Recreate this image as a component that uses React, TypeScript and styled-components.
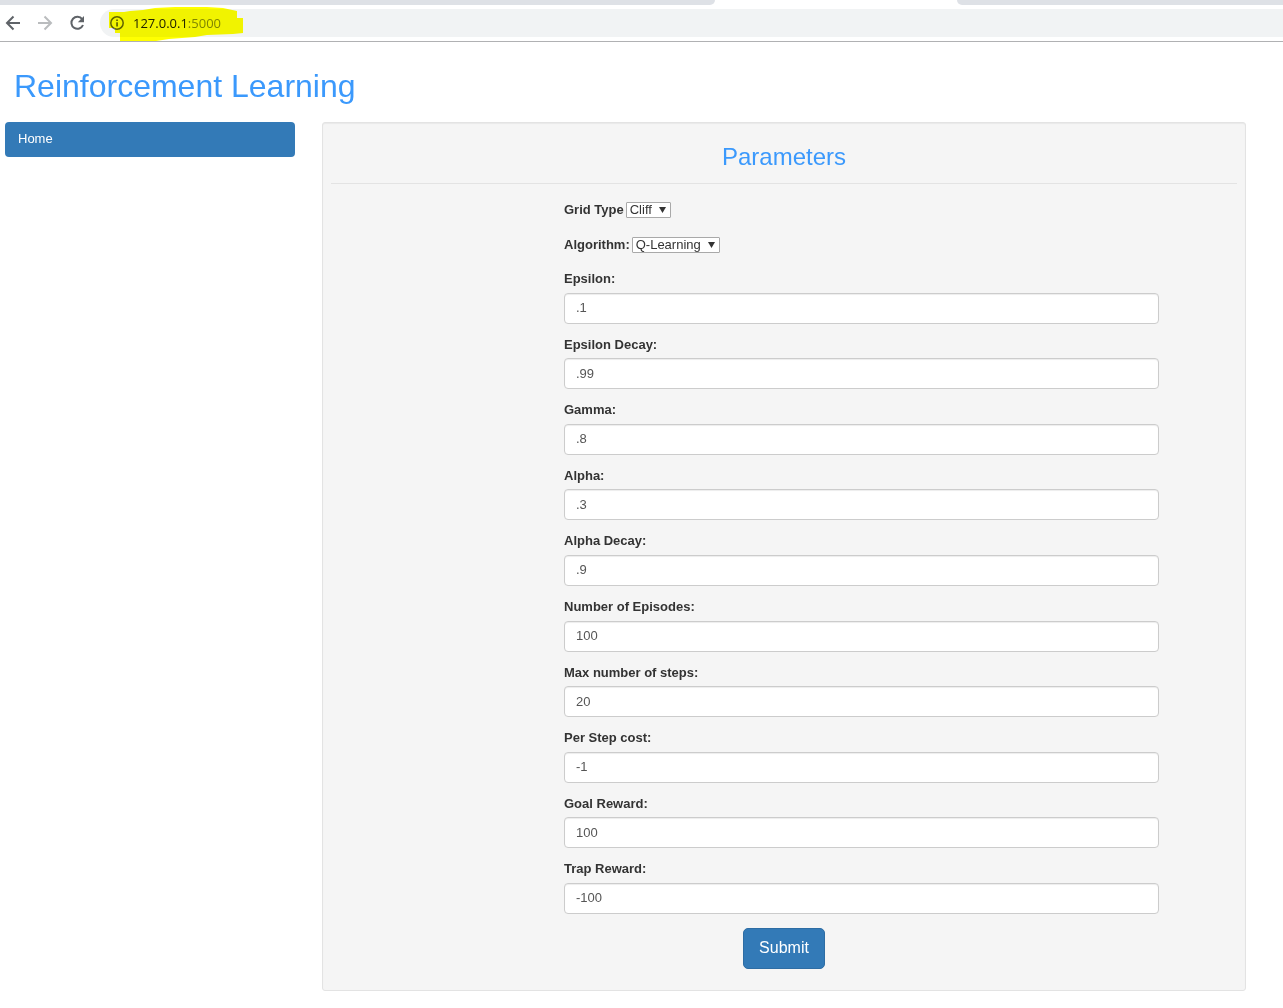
import React from "react";
import styled, { createGlobalStyle } from "styled-components";

const GlobalStyle = createGlobalStyle`
  * { box-sizing: border-box; }
  body {
    margin: 0;
    background: #fff;
    color: #333;
    font-family: "Liberation Sans", Arial, sans-serif;
    font-size: 13px;
    line-height: 1.42857;
  }
`;

const TabStrip = styled.div`
  display: flex;
  height: 5px;
  background: #fff;
`;

const InactiveTabs = styled.div<{ $side: "left" | "right" }>`
  flex: ${(p) => (p.$side === "left" ? "715 1 0" : "326 1 0")};
  background: #dee1e6;
  border-radius: ${(p) => (p.$side === "left" ? "0 0 6px 0" : "0 0 0 6px")};
`;

const ActiveTab = styled.div`
  flex: 242 1 0;
`;

const Toolbar = styled.header`
  display: flex;
  align-items: center;
  height: 37px;
  padding-left: 4px;
  border-bottom: 1px solid #b0b1b3;
`;

const NavButton = styled.button`
  display: flex;
  align-items: center;
  justify-content: center;
  width: 18px;
  height: 18px;
  margin-right: 14px;
  padding: 0;
  border: 0;
  background: none;
`;

const AddressBar = styled.div`
  position: relative;
  display: flex;
  align-items: center;
  flex: 1;
  gap: 9px;
  height: 28px;
  padding-left: 10px;
  border-radius: 14px 0 0 14px;
  background: #f1f3f4;
`;

const Url = styled.div`
  font: 13px/18px "Open Sans", "Noto Sans", sans-serif;
  color: #202124;
`;

const Port = styled.span`
  color: #80868b;
`;

const Marker = styled.svg`
  position: absolute;
  left: 9px;
  top: -2px;
  mix-blend-mode: multiply;
  pointer-events: none;
`;

const Title = styled.h1`
  margin: 0;
  padding: 24px 14px 16px;
  color: #3b99fc;
  font-size: 32px;
  font-weight: 400;
  line-height: 40px;
`;

const Layout = styled.div`
  display: flex;
  align-items: flex-start;
  gap: 27px;
  padding: 0 37px 17px 5px;
`;

const Sidebar = styled.nav`
  flex: 0 0 290px;
`;

const SidebarLink = styled.a`
  display: block;
  padding: 8px 13px 9px;
  border-radius: 4px;
  background: #337ab7;
  color: #fff;
  line-height: 18px;
  text-decoration: none;
`;

const Well = styled.main`
  flex: 1;
  min-width: 0;
  padding: 8px 8px 21px;
  border: 1px solid #e3e3e3;
  border-radius: 3px;
  background: #f5f5f5;
  box-shadow: inset 0 1px 1px rgba(0, 0, 0, 0.05);
`;

const Heading = styled.h2`
  margin: 0;
  padding: 10px 0;
  border-bottom: 1px solid #e3e3e3;
  color: #3b99fc;
  font-size: 24px;
  font-weight: 400;
  line-height: 32px;
  text-align: center;
`;

const Fields = styled.div`
  display: grid;
  grid-template-columns: 233fr 595fr 78fr;
  padding-top: 17px;
`;

const FieldColumn = styled.div`
  grid-column: 2;
`;

const SelectRow = styled.div`
  display: flex;
  align-items: center;
  gap: 2px;
  margin-bottom: 16px;
`;

const Label = styled.label`
  display: block;
  font-weight: 700;
`;

const SelectBox = styled.span`
  position: relative;
  display: flex;
`;

const Select = styled.select`
  appearance: none;
  height: 16px;
  padding: 0 17px 0 3px;
  border: 1px solid #a9a9a9;
  border-radius: 1px;
  background: #fff;
  color: #333;
  font: 13px/14px "Liberation Sans", Arial, sans-serif;
`;

const SelectArrow = styled.svg`
  position: absolute;
  right: 5px;
  top: 5px;
  pointer-events: none;
`;

const Field = styled.div`
  margin-bottom: 12px;
`;

const Input = styled.input`
  display: block;
  width: 100%;
  height: 31px;
  margin-top: 4px;
  padding: 5px 11px 6px;
  border: 1px solid #ccc;
  border-radius: 4px;
  background: #fff;
  box-shadow: inset 0 1px 1px rgba(0, 0, 0, 0.075);
  color: #555;
  font: 13px/18px "Liberation Sans", Arial, sans-serif;
`;

const Actions = styled.div`
  display: flex;
  justify-content: center;
  padding-top: 2px;
`;

const Submit = styled.button`
  height: 41px;
  padding: 0 15px;
  border: 1px solid #2e6da4;
  border-radius: 5px;
  background: #337ab7;
  color: #fff;
  font: 16px/22px "Liberation Sans", Arial, sans-serif;
`;

const selects = [
  { id: "grid", label: "Grid Type", options: ["Cliff"] },
  { id: "algorithm", label: "Algorithm:", options: ["Q-Learning"] },
];

const fields = [
  { id: "epsilon", label: "Epsilon:", value: ".1" },
  { id: "epsilon-decay", label: "Epsilon Decay:", value: ".99" },
  { id: "gamma", label: "Gamma:", value: ".8" },
  { id: "alpha", label: "Alpha:", value: ".3" },
  { id: "alpha-decay", label: "Alpha Decay:", value: ".9" },
  { id: "episodes", label: "Number of Episodes:", value: "100" },
  { id: "max-steps", label: "Max number of steps:", value: "20" },
  { id: "step-cost", label: "Per Step cost:", value: "-1" },
  { id: "goal-reward", label: "Goal Reward:", value: "100" },
  { id: "trap-reward", label: "Trap Reward:", value: "-100" },
];

function BrowserBar() {
  return (
    <>
      <TabStrip>
        <InactiveTabs $side="left" />
        <ActiveTab />
        <InactiveTabs $side="right" />
      </TabStrip>
      <Toolbar>
        <NavButton aria-label="Back">
          <svg width="18" height="18" viewBox="0 0 18 18" fill="none" stroke="#5f6368" strokeWidth="2">
            <path d="M16 9H3.5M9.5 2.5L3 9l6.5 6.5" />
          </svg>
        </NavButton>
        <NavButton aria-label="Forward">
          <svg width="18" height="18" viewBox="0 0 18 18" fill="none" stroke="#babcbe" strokeWidth="2">
            <path d="M2 9h12.500M8.500 2.500L15 9l-6.500 6.500" />
          </svg>
        </NavButton>
        <NavButton aria-label="Reload">
          <svg width="18" height="18" viewBox="0 0 18 18">
            <path d="M14.200 5.200A6 6 0 1 0 15 11" fill="none" stroke="#5f6368" strokeWidth="2" />
            <path d="M16 2v6.200H9.800z" fill="#5f6368" />
          </svg>
        </NavButton>
        <AddressBar>
          <svg width="14" height="14" viewBox="0 0 14 14" aria-hidden="true">
            <circle cx="7" cy="7" r="6.200" fill="none" stroke="#5f6368" strokeWidth="1.500" />
            <path d="M6.200 6.200h1.700v4.300H6.200zM6.200 3.400h1.700v1.700H6.200z" fill="#5f6368" />
          </svg>
          <Url role="textbox" aria-label="Address">
            127.0.0.1<Port>:5000</Port>
          </Url>
          <Marker width="135" height="36" viewBox="0 0 135 36" aria-hidden="true">
            <path
              d="M0 5h15l6-1 13-1 12-2 20-1h32l16 1 14 3v7h6v15l-10 1-26 1-12 2-26 2-13 2H11v-8H6v-5H0z"
              fill="#ffff00"
            />
          </Marker>
        </AddressBar>
      </Toolbar>
    </>
  );
}

export default function App() {
  return (
    <>
      <GlobalStyle />
      <BrowserBar />
      <Title>Reinforcement Learning</Title>
      <Layout>
        <Sidebar>
          <SidebarLink href="#">Home</SidebarLink>
        </Sidebar>
        <Well>
          <Heading>Parameters</Heading>
          <form onSubmit={(e) => e.preventDefault()}>
            <Fields>
              <FieldColumn>
                {selects.map((s) => (
                  <SelectRow key={s.id}>
                    <Label htmlFor={s.id}>{s.label}</Label>
                    <SelectBox>
                      <Select id={s.id}>
                        {s.options.map((o) => (
                          <option key={o}>{o}</option>
                        ))}
                      </Select>
                      <SelectArrow width="7" height="6" viewBox="0 0 7 6" aria-hidden="true">
                        <path d="M0 0h7L3.500 6z" fill="#333" />
                      </SelectArrow>
                    </SelectBox>
                  </SelectRow>
                ))}
                {fields.map((f) => (
                  <Field key={f.id}>
                    <Label htmlFor={f.id}>{f.label}</Label>
                    <Input id={f.id} type="text" defaultValue={f.value} />
                  </Field>
                ))}
              </FieldColumn>
            </Fields>
            <Actions>
              <Submit type="submit">Submit</Submit>
            </Actions>
          </form>
        </Well>
      </Layout>
    </>
  );
}
